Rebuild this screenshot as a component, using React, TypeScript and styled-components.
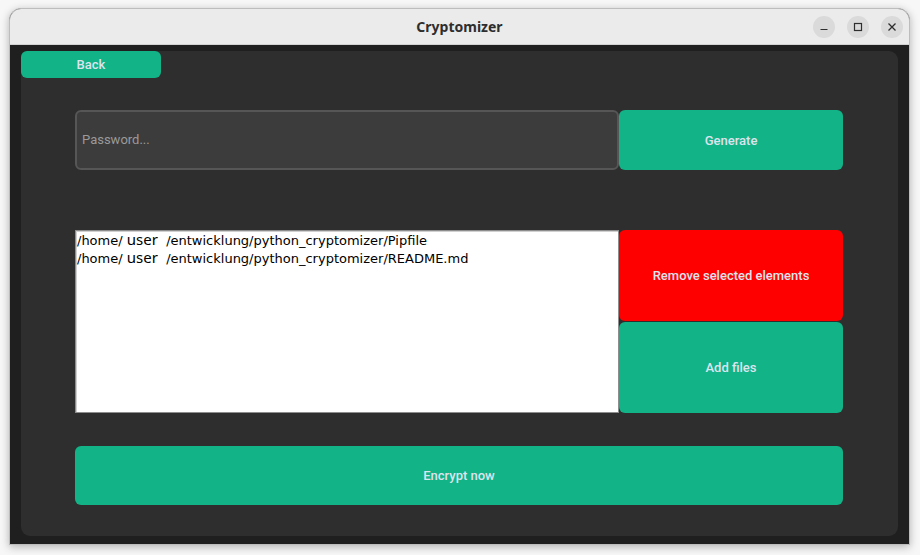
import React from "react";
import styled, { createGlobalStyle } from "styled-components";

const Global = createGlobalStyle`
  html, body { margin: 0; padding: 0; background: #f7f7f7; }
  body { width: 920px; height: 555px; overflow: hidden; }
  * { box-sizing: border-box; }
`;

const Stage = styled.div`
  padding: 8px 0 0 9px;
`;

const Window = styled.div`
  width: 901px;
  height: 537px;
  border: 1px solid #bdbdbd;
  border-radius: 12px 12px 0 0;
  overflow: hidden;
  display: flex;
  flex-direction: column;
  box-shadow: 0 2px 9px rgba(0, 0, 0, 0.28);
  background: #1f1f1f;
`;

const TitleBar = styled.div`
  height: 36px;
  flex: none;
  background: #ebebeb;
  border-bottom: 1px solid #d2d2d2;
  display: flex;
  align-items: center;
  justify-content: center;
  position: relative;
`;

const Title = styled.div`
  font-family: "Noto Sans", "DejaVu Sans", sans-serif;
  font-weight: 700;
  font-size: 14px;
  color: #2e2e2e;
`;

const Controls = styled.div`
  position: absolute;
  right: 6px;
  top: 7px;
  display: flex;
  gap: 12px;
`;

const CtrlButton = styled.div`
  width: 22px;
  height: 22px;
  border-radius: 50%;
  background: #dadada;
  display: flex;
  align-items: center;
  justify-content: center;
  color: #2e2e2e;
`;

const Frame = styled.div`
  flex: 1;
  padding: 6px 11px 8px 11px;
  display: flex;
`;

const Panel = styled.div`
  flex: 1;
  background: #2e2e2e;
  border-radius: 9px;
  display: flex;
  flex-direction: column;
  align-items: flex-start;
`;

const Btn = styled.button<{ $bg?: string; $w?: string; $h: string }>`
  border: none;
  margin: 0;
  padding: 0;
  width: ${(p) => p.$w || "100%"};
  height: ${(p) => p.$h};
  background: ${(p) => p.$bg || "#12b386"};
  border-radius: 6px;
  color: #dce4ee;
  font-family: Roboto, "Noto Sans", sans-serif;
  font-size: 13px;
  font-weight: 500;
  display: flex;
  align-items: center;
  justify-content: center;
`;

const Content = styled.div`
  margin: 32px 0 0 54px;
  display: flex;
  flex-direction: column;
  width: 768px;
`;

const Row = styled.div<{ $mt?: number }>`
  display: grid;
  grid-template-columns: 544px 224px;
  margin-top: ${(p) => p.$mt || 0}px;
`;

const Input = styled.div`
  height: 60px;
  background: #3c3c3c;
  border: 2px solid #565656;
  border-radius: 6px;
  display: flex;
  align-items: center;
  padding: 0 0 1px 5px;
  font-family: Roboto, "Noto Sans", sans-serif;
  font-size: 13px;
  color: #9a9a9a;
`;

const ListBox = styled.div`
  height: 183px;
  background: #ffffff;
  border: 1px solid #8d8d8d;
  box-shadow: inset 1px 1px 0 #d0d0d0;
  padding: 0 0 0 1px;
  font-family: "DejaVu Sans", sans-serif;
  font-size: 13px;
  color: #000;
`;

const ListItem = styled.div`
  height: 18px;
  line-height: 17px;
  white-space: pre;
`;

const User = styled.span`
  font-family: "Noto Sans", sans-serif;
  font-size: 15px;
`;

const Stack = styled.div`
  display: flex;
  flex-direction: column;
  gap: 1px;
`;

const files = ["Pipfile", "README.md"];

export default function App() {
  return (
    <>
      <Global />
      <Stage>
        <Window>
          <TitleBar>
            <Title>Cryptomizer</Title>
            <Controls>
              <CtrlButton>
                <svg width="10" height="10" viewBox="0 0 10 10">
                  <path d="M1.5 7.5h7" stroke="currentColor" strokeWidth="1.2" />
                </svg>
              </CtrlButton>
              <CtrlButton>
                <svg width="10" height="10" viewBox="0 0 10 10">
                  <rect x="1.5" y="1.5" width="7" height="7" fill="none" stroke="currentColor" strokeWidth="1.2" />
                </svg>
              </CtrlButton>
              <CtrlButton>
                <svg width="10" height="10" viewBox="0 0 10 10">
                  <path d="M1.5 1.5l7 7M8.5 1.5l-7 7" stroke="currentColor" strokeWidth="1.3" />
                </svg>
              </CtrlButton>
            </Controls>
          </TitleBar>
          <Frame>
            <Panel>
              <Btn $w="140px" $h="27px">Back</Btn>
              <Content>
                <Row>
                  <Input>Password...</Input>
                  <Btn $h="60px">Generate</Btn>
                </Row>
                <Row $mt={60}>
                  <ListBox>
                    {files.map((f) => (
                      <ListItem key={f}>
                        /home/ <User>user</User>  /entwicklung/python_cryptomizer/{f}
                      </ListItem>
                    ))}
                  </ListBox>
                  <Stack>
                    <Btn $h="91px" $bg="#ff0000">Remove selected elements</Btn>
                    <Btn $h="91px">Add files</Btn>
                  </Stack>
                </Row>
                <Row $mt={33}>
                  <Btn $h="59px" style={{ gridColumn: "1 / 3" }}>Encrypt now</Btn>
                </Row>
              </Content>
            </Panel>
          </Frame>
        </Window>
      </Stage>
    </>
  );
}
